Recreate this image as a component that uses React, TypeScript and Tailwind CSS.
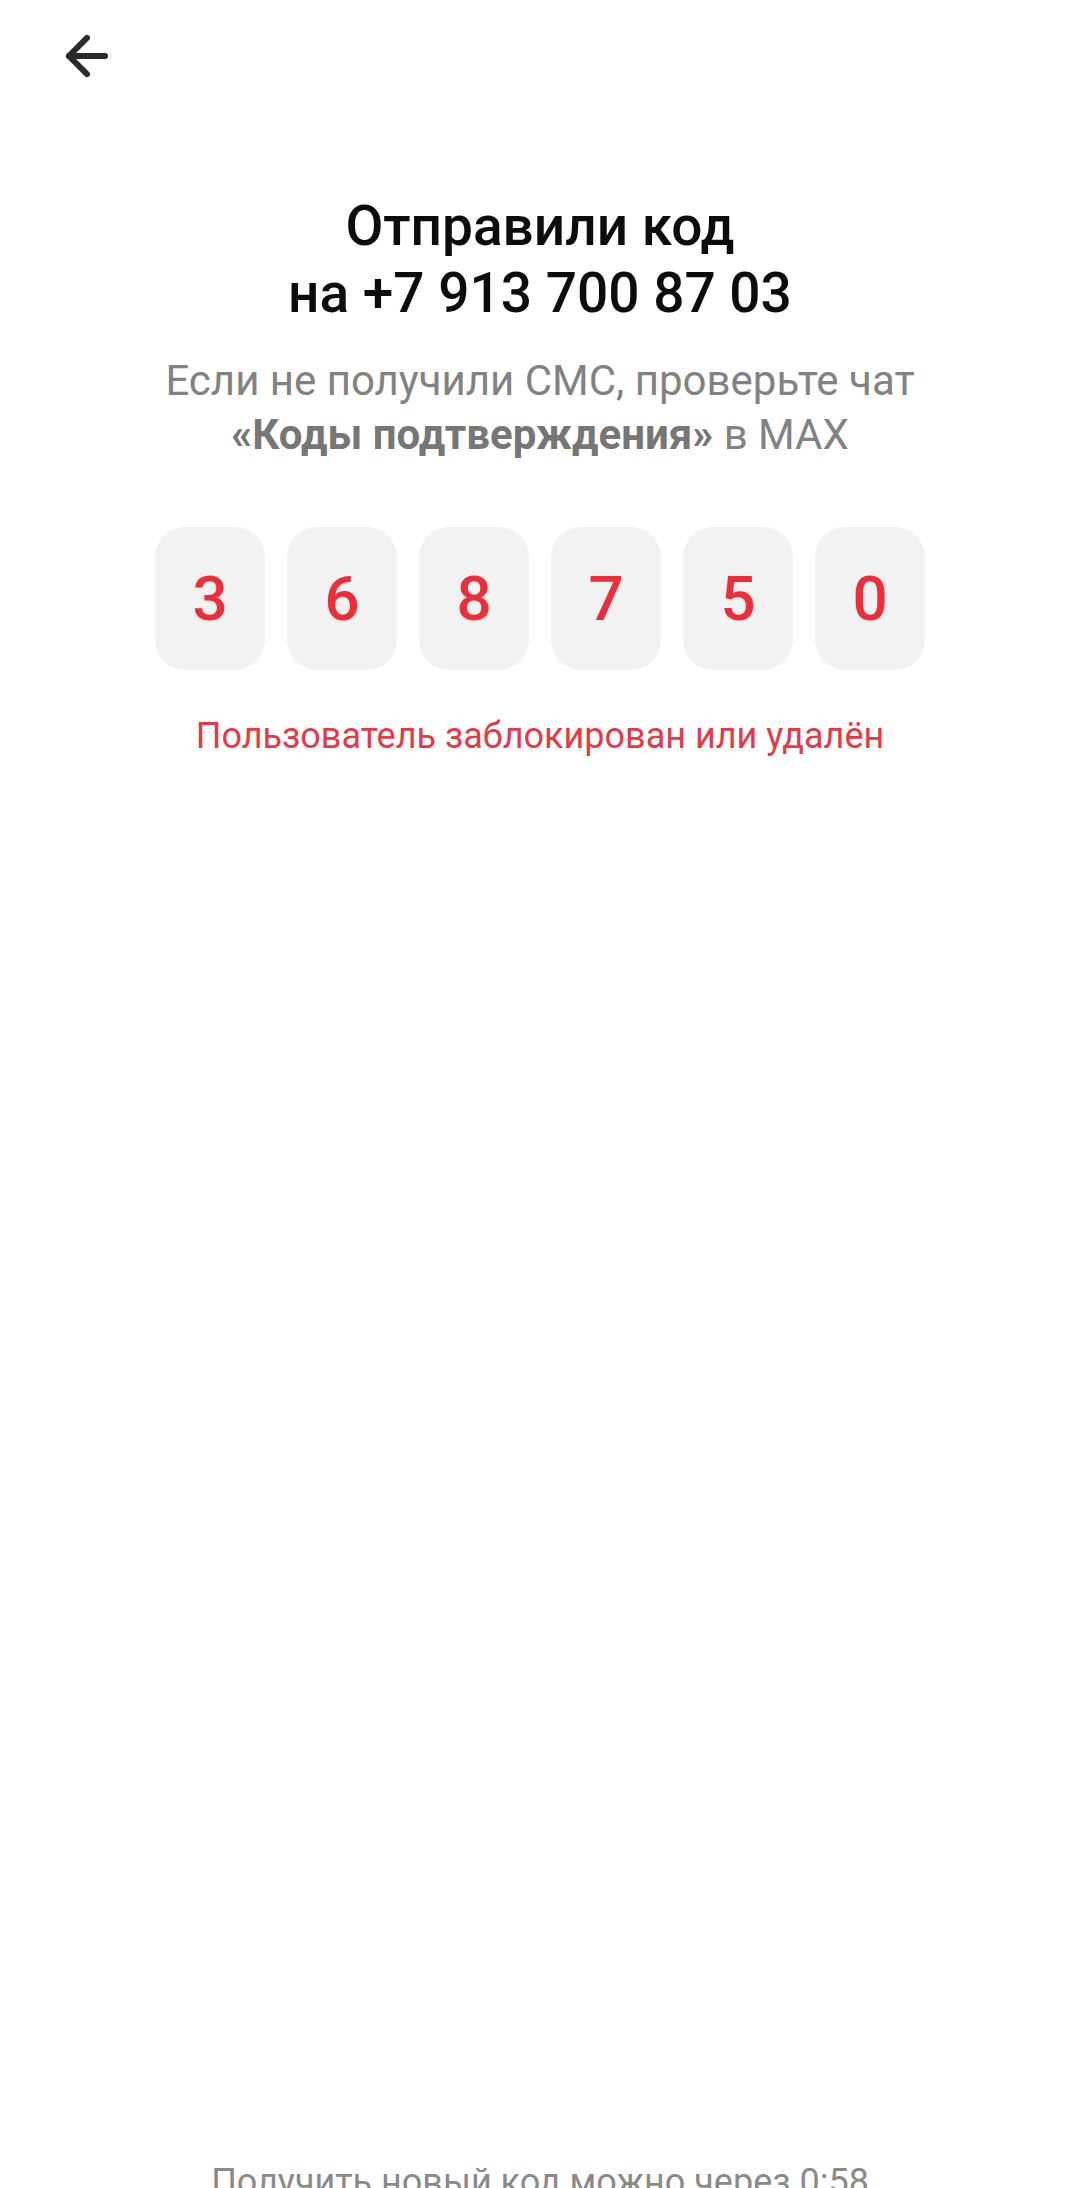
import { ArrowLeft } from 'lucide-react';

const code = ['3', '6', '8', '7', '5', '0'];

export default function App() {
  return (
    <div
      className="relative h-[2188px] w-[1080px] overflow-hidden bg-white"
      style={{ fontFamily: 'Roboto, "Noto Sans", sans-serif' }}
    >
      {/* Top bar */}
      <div className="pl-[56px] pt-[25px]">
        <ArrowLeft size={62} strokeWidth={2.3} className="text-[#2a2a2a]" />
      </div>

      <div className="flex flex-col items-center">
        {/* Heading */}
        <h1 className="mt-[106px] text-center text-[55px] font-medium leading-[67px] text-[#0c0c0c]">
          Отправили код
          <br />
          на +7 913 700 87 03
        </h1>

        {/* Hint */}
        <p className="mt-[27px] text-center text-[42px] leading-[54px] text-[#828282]">
          Если не получили СМС, проверьте чат
          <br />
          <span className="font-bold text-[#767676]">«Коды подтверждения»</span> в MAX
        </p>

        {/* Code cells */}
        <div className="mt-[65px] flex gap-[22px]">
          {code.map((d, i) => (
            <div
              key={i}
              className="flex h-[143px] w-[110px] items-center justify-center rounded-[30px] bg-[#f2f2f2] text-[62px] font-medium text-[#ee2d3b]"
            >
              {d}
            </div>
          ))}
        </div>

        {/* Error */}
        <p className="mt-[42px] text-[36px] leading-[48px] text-[#e63946]">
          Пользователь заблокирован или удалён
        </p>

        {/* Resend timer */}
        <p className="mt-[1398px] text-[36px] leading-[48px] text-[#8a8a8a]">
          Получить новый код можно через 0:58
        </p>
      </div>
    </div>
  );
}
